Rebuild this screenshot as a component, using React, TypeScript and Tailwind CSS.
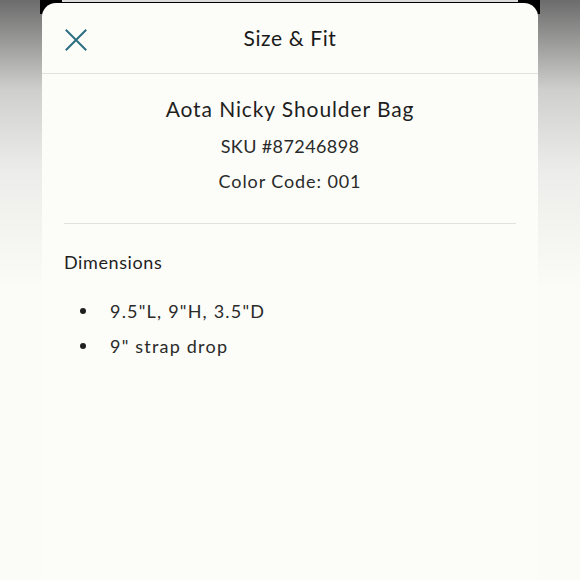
import React from 'react';

const font = { fontFamily: 'Lato, "Noto Sans", sans-serif' };

function CloseIcon() {
  return (
    <svg width="22" height="22" viewBox="0 0 22 22" fill="none">
      <path d="M1.5 1.5L20.5 20.5M20.5 1.5L1.5 20.5" stroke="#2b6f80" strokeWidth="2" strokeLinecap="square" />
    </svg>
  );
}

export default function App() {
  const dims = ['9.5"L, 9"H, 3.5"D', '9" strap drop'];

  return (
    <div
      className="relative w-[580px] h-[580px] overflow-hidden bg-[linear-gradient(to_bottom,#6c6c6c_0px,#cfcfcd_90px,#ececea_170px,#fbfcf7_290px)]"
      style={font}
    >
      {/* sheet behind */}
      <div className="absolute left-[40px] right-[40px] top-0 h-[14px] bg-black">
        <div className="mx-[22px] h-[2px] bg-[#dcdcdc]" />
      </div>

      {/* Sheet */}
      <div className="relative mx-[42px] mt-[3px] h-[577px] rounded-t-[14px] bg-[#fcfdf8] text-[#1f1f1f]">
        {/* Header */}
        <div className="relative flex h-[71px] items-center justify-center border-b border-[#e2e2de]">
          <button className="absolute left-[23px] top-[26px]">
            <CloseIcon />
          </button>
          <h1 className="text-[21px] tracking-[0.6px] text-[#1a1a1a]">Size &amp; Fit</h1>
        </div>

        {/* Product info */}
        <div className="mx-[22px] flex flex-col items-center border-b border-[#e2e2de] pt-[20px] pb-[27px]">
          <p className="text-[21px] leading-[30px] tracking-[0.9px]">Aota Nicky Shoulder Bag</p>
          <p className="mt-[7px] text-[18px] leading-[30px] tracking-[0.4px] text-[#2a2a2a]">SKU #87246898</p>
          <p className="mt-[5px] text-[18px] leading-[30px] tracking-[0.9px] text-[#2a2a2a]">Color Code: 001</p>
        </div>

        {/* Dimensions */}
        <div className="px-[22px] pt-[25px]">
          <h2 className="text-[18px] leading-[26px] tracking-[0.6px]">Dimensions</h2>
          <ul className="mt-[23px] flex flex-col gap-[9px]">
            {dims.map((d) => (
              <li key={d} className="flex items-center text-[18px] leading-[26px] tracking-[1.2px] text-[#2a2a2a]">
                <span className="ml-[16px] mr-[24px] h-[6px] w-[6px] rounded-full bg-[#1f1f1f]" />
                {d}
              </li>
            ))}
          </ul>
        </div>
      </div>
    </div>
  );
}
